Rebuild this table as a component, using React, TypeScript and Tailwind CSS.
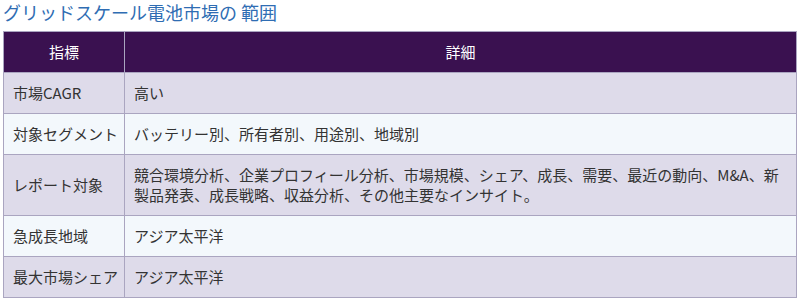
const rows = [
  { k: '市場CAGR', v: '高い' },
  { k: '対象セグメント', v: 'バッテリー別、所有者別、用途別、地域別' },
  {
    k: 'レポート対象',
    v: '競合環境分析、企業プロフィール分析、市場規模、シェア、成長、需要、最近の動向、M&A、新製品発表、成長戦略、収益分析、その他主要なインサイト。',
  },
  { k: '急成長地域', v: 'アジア太平洋' },
  { k: '最大市場シェア', v: 'アジア太平洋' },
];

export default function App() {
  return (
    <div
      className="w-[804px] h-[303px] bg-white pl-[3px] text-[#333]"
      style={{ fontFamily: '"Noto Sans CJK JP", "Noto Sans", sans-serif' }}
    >
      <h2 className="text-[18px] leading-[25px] text-[#2f6db3] mb-[6px]">グリッドスケール電池市場の 範囲</h2>
      <table className="w-[794px] border-collapse text-[15px] leading-[20px]">
        <thead>
          <tr className="bg-[#3a1150] text-white">
            <th className="w-[121px] border border-[#aaa5c0] py-[10px] font-normal text-center">指標</th>
            <th className="border border-[#aaa5c0] py-[10px] font-normal text-center">詳細</th>
          </tr>
        </thead>
        <tbody>
          {rows.map((r, i) => (
            <tr key={r.k} className={i % 2 === 0 ? 'bg-[#dedbea]' : 'bg-[#f3f8fc]'}>
              <td className="border border-[#aaa5c0] pl-[9px] pr-[6px] py-[10px] align-middle whitespace-nowrap">{r.k}</td>
              <td className="border border-[#aaa5c0] px-[9px] py-[10px] align-middle">{r.v}</td>
            </tr>
          ))}
        </tbody>
      </table>
    </div>
  );
}
